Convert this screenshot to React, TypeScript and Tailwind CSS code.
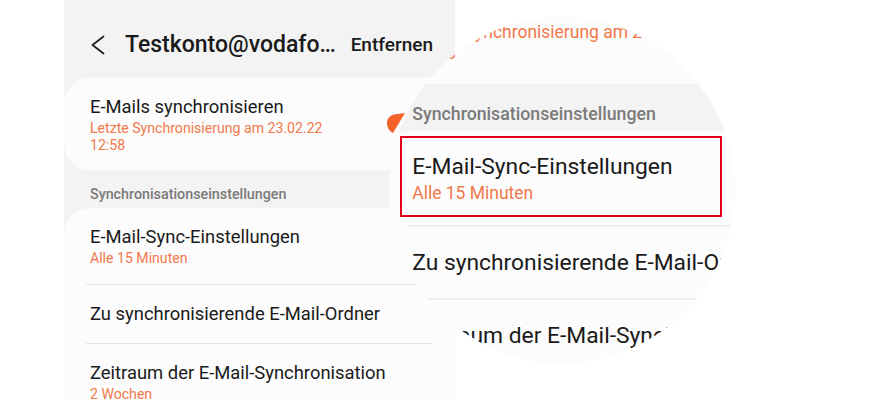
const Phone = () => {
  return (
    <div className="w-[391px] h-[400px] bg-[#f3f3f3] font-[Roboto,sans-serif] overflow-hidden">
      {/* header */}
      <div className="h-[78px] flex items-center pt-[11px]">
        <svg className="ml-[27px] w-[14px] h-[20px] text-[#222]" viewBox="0 0 14 20" fill="none" stroke="currentColor">
          <polyline points="12.5,1.5 1.5,10 12.5,18.5" strokeWidth={1.8} strokeLinecap="round" strokeLinejoin="round" />
        </svg>
        <span className="ml-[20px] text-[23px] leading-[28px] font-medium text-[#1a1a1a] whitespace-nowrap">
          Testkonto@vodafo…
        </span>
        <span className="ml-auto mr-[22px] text-[19px] leading-[24px] font-medium text-[#1a1a1a] whitespace-nowrap">
          Entfernen
        </span>
      </div>

      {/* sync card */}
      <div className="bg-[#fcfcfc] rounded-[26px] pl-[26px] pt-[17px] pb-[16px]">
        <div className="text-[18.4px] leading-[24px] text-[#1a1a1a]">E-Mails synchronisieren</div>
        <div className="mt-[1px] text-[14.1px] leading-[17px] text-[#f2784a]">
          Letzte Synchronisierung am 23.02.22
          <br />
          12:58
        </div>
      </div>

      <div className="pl-[26px] pt-[14px] pb-[4px] text-[14.3px] leading-[20px] font-medium text-[#7a7a7a]">
        Synchronisationseinstellungen
      </div>

      {/* settings card */}
      <div className="bg-[#fcfcfc] rounded-t-[26px]">
        <div className="px-[26px] py-[17px]">
          <div className="text-[18.4px] leading-[24px] text-[#1a1a1a]">E-Mail-Sync-Einstellungen</div>
          <div className="mt-[1px] text-[14.1px] leading-[17px] text-[#f2784a]">Alle 15 Minuten</div>
        </div>
        <div className="mx-[22px] h-px bg-[#e6e6e6]"></div>
        <div className="px-[26px] py-[17px]">
          <div className="text-[18.4px] leading-[24px] text-[#1a1a1a]">Zu synchronisierende E-Mail-Ordner</div>
        </div>
        <div className="mx-[22px] h-px bg-[#e6e6e6]"></div>
        <div className="px-[26px] py-[17px]">
          <div className="text-[18.4px] leading-[24px] text-[#1a1a1a]">Zeitraum der E-Mail-Synchronisation</div>
          <div className="mt-[1px] text-[14.1px] leading-[17px] text-[#f2784a]">2 Wochen</div>
        </div>
      </div>
    </div>
  );
};

const App = () => {
  return (
    <div className="relative w-[879px] h-[400px] bg-white overflow-hidden">
      <div className="ml-[64px]">
        <Phone />
      </div>

      {/* magnifier */}
      <div className="absolute left-[389px] top-[17px] w-[346px] h-[346px] rounded-full overflow-hidden bg-[#fafafa]" aria-hidden="true">
        <div className="absolute left-[-9px] top-[-144px] origin-top-left scale-[1.24]">
          <Phone />
        </div>
      </div>

      {/* highlight */}
      <div className="absolute left-[400px] top-[136px] w-[322px] h-[81px] border-2 border-[#e2001a]"></div>

      <svg className="absolute left-[386px] top-[112px] w-[20px] h-[23px]" viewBox="0 0 20 23">
        <path d="M19 1 L8 2.5 C3.5 3.5 1 7 1 11 C1 15.5 3.5 19.5 7 21 Z" fill="#f4622a" />
      </svg>
    </div>
  );
};

export default App;
